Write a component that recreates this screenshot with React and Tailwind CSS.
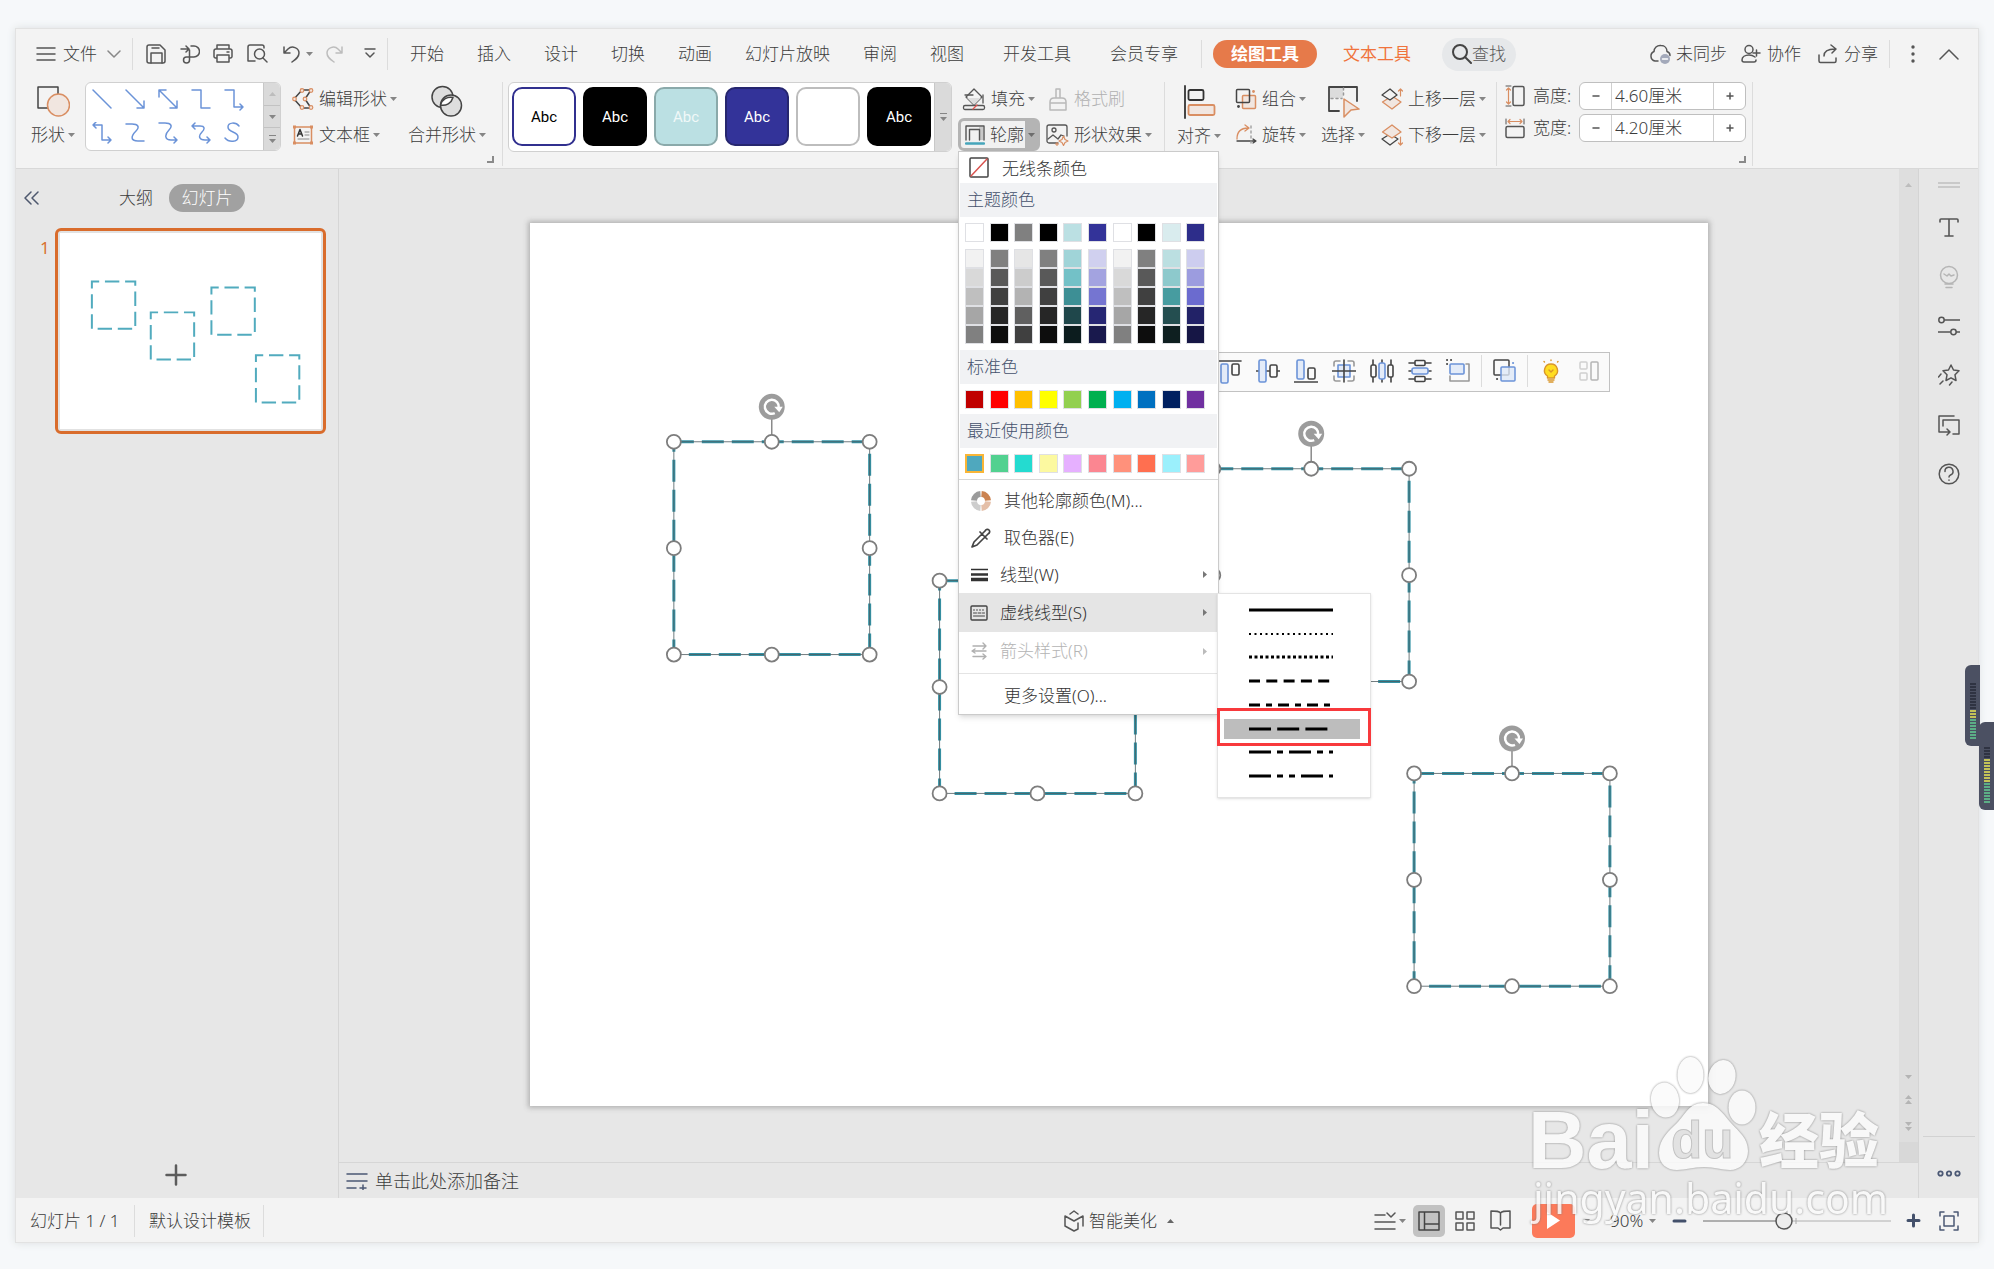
import React from "react";

/* ---------- shared pieces ---------- */

function Ico({ w = 22, h = 22, c = "#555", sw = 1.5, className = "", children }) {
  return (
    <svg
      width={w}
      height={h}
      viewBox={`0 0 ${w} ${h}`}
      fill="none"
      stroke={c}
      strokeWidth={sw}
      strokeLinecap="round"
      strokeLinejoin="round"
      aria-hidden="true"
      className={`block shrink-0 ${className}`}
    >
      {children}
    </svg>
  );
}

function Caret({ c = "#858585", up = false, className = "" }) {
  return (
    <svg width="7" height="4" viewBox="0 0 7 4" aria-hidden="true" className={`block shrink-0 ${className}`}>
      <path d={up ? "M0 4h7L3.500 0z" : "M0 0h7L3.500 4z"} fill={c} />
    </svg>
  );
}

const O = "#d98e62";
const B = "#6b93d8";

function Divider({ className = "" }) {
  return <div className={`w-px shrink-0 bg-[#dcdcdc] ${className}`} />;
}

function Corner({ className = "" }) {
  return (
    <Ico w={8} h={8} c="#8a8a8a" sw={2} className={className}>
      <path d="M7 1v6H1" strokeLinecap="butt" strokeLinejoin="miter" />
    </Ico>
  );
}

/* ---------- title / tab row ---------- */

function QuickAccess() {
  return (
    <div className="flex h-8 items-center">
      <button type="button" className="ml-5 flex items-center">
        <Ico w={20} h={14} c="#555"><path d="M1 1h18M1 7h18M1 13h18" /></Ico>
        <span className="ml-[7px]">文件</span>
        <Ico w={14} h={8} c="#888" className="ml-[10px]"><path d="M1 1l6 6 6-6" /></Ico>
      </button>
      <Divider className="ml-[11px] h-8" />
      <button type="button" aria-label="保存" className="ml-[13px]">
        <Ico w={20} h={20}>
          <path d="M3 1h11l5 5v11a2 2 0 0 1-2 2H3a2 2 0 0 1-2-2V3a2 2 0 0 1 2-2z" />
          <path d="M5 19V9h11v10M6 4h7" />
        </Ico>
      </button>
      <button type="button" aria-label="输出为PDF" className="ml-[14px]">
        <Ico w={20} h={20}>
          <path d="M1 5h8M6 2l3 3-3 3M11 2h3a5.500 5.500 0 0 1 0 11H6.500a3 3 0 1 0 3 3V6" />
        </Ico>
      </button>
      <button type="button" aria-label="打印" className="ml-[13px]">
        <Ico w={20} h={20}>
          <path d="M4 5V1h12v4M4 14H2.500a1.500 1.500 0 0 1-1.500-1.500V7a2 2 0 0 1 2-2h14a2 2 0 0 1 2 2v5.500a1.500 1.500 0 0 1-1.500 1.500H16M4 11h12v7H4zM14 8h2" />
        </Ico>
      </button>
      <button type="button" aria-label="打印预览" className="ml-[14px]">
        <Ico w={21} h={20}>
          <path d="M17 4V3a2 2 0 0 0-2-2H3a2 2 0 0 0-2 2v14h7" />
          <circle cx="12.500" cy="10" r="5" />
          <path d="M16 14l4 4" />
        </Ico>
      </button>
      <button type="button" aria-label="撤销" className="ml-[14px] flex items-center">
        <Ico w={18} h={18}><path d="M2 2v6h6M2 8l4-4c4-4 11-1 11 4 0 4-3 6-7 9" /></Ico>
        <Caret className="ml-[6px]" />
      </button>
      <button type="button" aria-label="恢复" className="ml-[13px]">
        <Ico w={18} h={18} c="#bdbdbd"><path d="M16 2v6h-6M16 8l-4-4C8 0 1 3 1 8c0 4 3 6 7 9" /></Ico>
      </button>
      <button type="button" aria-label="自定义快速访问工具栏" className="ml-[20px]">
        <Ico w={12} h={12}><path d="M1 1h10M2 5l4 4 4-4" /></Ico>
      </button>
      <Divider className="ml-[11px] h-8" />
    </div>
  );
}

function TabRow() {
  const main = ["开始", "插入", "设计", "切换", "动画", "幻灯片放映", "审阅", "视图"];
  return (
    <header className="flex h-[50px] items-center whitespace-nowrap">
      <QuickAccess />
      <nav className="ml-[22px] flex items-center gap-[33px]">
        {main.map((t) => (
          <button key={t} type="button">{t}</button>
        ))}
      </nav>
      <nav className="ml-[39px] flex items-center gap-[39px]">
        <button type="button">开发工具</button>
        <button type="button">会员专享</button>
      </nav>
      <Divider className="ml-[23px] h-7" />
      <button type="button" className="ml-[11px] h-7 w-[104px] rounded-full bg-[#e67a4a] font-bold text-white">绘图工具</button>
      <button type="button" className="ml-[26px] font-normal text-[#f0733c]">文本工具</button>
      <button type="button" className="ml-[31px] flex h-[33px] w-[74px] items-center rounded-full bg-[#e6e8ea] pl-[10px] text-[#5a5a5a]">
        <Ico w={20} h={20} c="#444" sw={2}><circle cx="8" cy="8" r="7" /><path d="M13 13l6 6" /></Ico>
        <span>查找</span>
      </button>
      <div className="flex-1" />
      <button type="button" className="flex items-center">
        <Ico w={22} h={20}>
          <path d="M9 17H6a5 5 0 0 1-1-9.500C5 4 8 1 12 1.500c4 0 6 3 6 6 1.500.5 3 2 3 4" />
          <circle cx="16" cy="15" r="5" fill="#a3a9ba" stroke="none" />
          <path d="M13.500 15h5" stroke="#fff" />
        </Ico>
        <span className="ml-[5px]">未同步</span>
      </button>
      <button type="button" className="ml-[14px] flex items-center">
        <Ico w={20} h={20}>
          <circle cx="8" cy="5.500" r="4" />
          <path d="M14 13c-2-1.500-4-2-6-2-4 0-7 2-7 5 0 1.500 1 2 2 2h10c1.500 0 2-.5 2-2M12 9h7M15.500 6v6" />
        </Ico>
        <span className="ml-[6px]">协作</span>
      </button>
      <button type="button" className="ml-[17px] flex items-center">
        <Ico w={20} h={20}>
          <path d="M1 11v6a1.500 1.500 0 0 0 1.500 1.500h14A1.500 1.500 0 0 0 18 17v-3M6 12c0-5 4-7 11-7M13 1l5 4-4 4" />
        </Ico>
        <span className="ml-[6px]">分享</span>
      </button>
      <Divider className="ml-[11px] h-7" />
      <button type="button" aria-label="更多" className="ml-[21px]">
        <svg width="4" height="18" viewBox="0 0 4 18" fill="#555" className="block"><circle cx="2" cy="2" r="1.700" /><circle cx="2" cy="9" r="1.700" /><circle cx="2" cy="16" r="1.700" /></svg>
      </button>
      <button type="button" aria-label="收起功能区" className="ml-[24px] mr-[19px]">
        <Ico w={20} h={11}><path d="M1 10l9-9 9 9" /></Ico>
      </button>
    </header>
  );
}

/* ---------- ribbon ---------- */

function BigButton({ icon, label }) {
  return (
    <button type="button" className="flex shrink-0 flex-col items-center pt-[3px]">
      {icon}
      <span className="mt-[5px] flex h-6 items-center">
        {label}
        <Caret className="ml-[3px]" />
      </span>
    </button>
  );
}

function SmallButton({ icon, label, caret = true, className = "" }) {
  return (
    <button type="button" className={`flex h-[33px] items-center ${className}`}>
      {icon}
      <span className="ml-[5px]">{label}</span>
      {caret && <Caret className="ml-[3px]" />}
    </button>
  );
}

const LINES = [
  <path d="M1 1l18 18" />,
  <path d="M1 1l18 18M19 12v7h-7" />,
  <path d="M1 1l18 18M19 12v7h-7M1 8V1h7" />,
  <path d="M1 1h9v18h9" />,
  <path d="M1 1h9v17h9M16 15l3 3-3 3" />,
  <path d="M1 3h9v15h9M16 15l3 3-3 3M4 0L1 3l3 3" />,
  <path d="M1 2h6c6 0 8 3 4 7-5 5-6 10 2 10h6" />,
  <path d="M1 1h6c6 0 8 3 4 7-5 5-4 10 2 10h6M16 15l3 3-3 3" />,
  <path d="M1 4h8c5 0 5 3 2 6-4 4-3 8 3 8h5M16 15l3 3-3 3M4 1L1 4l3 3" />,
  <path d="M15 4c-3-4-11-4-11 1 0 6 10 4 10 10 0 5-9 6-13 1" />,
];

function ShapeGallery() {
  return (
    <div className="ml-[10px] flex h-[69px] w-[196px] shrink-0 overflow-hidden rounded-[6px] border border-[#d0d0d0] bg-white">
      <div className="grid flex-1 grid-cols-5 grid-rows-2 place-items-center pr-[12px] pb-px">
        {LINES.map((l, i) => (
          <button key={i} type="button" aria-label={`线条 ${i + 1}`}>
            <Ico w={21} h={22} c={B}>{l}</Ico>
          </button>
        ))}
      </div>
      <div className="flex w-[17px] flex-col divide-y divide-[#c2c2c2] border-l border-[#c8c8c8] bg-[#dadada]">
        <button type="button" aria-label="上一行" className="flex flex-1 items-center justify-center"><Caret up c="#bdbdbd" /></button>
        <button type="button" aria-label="下一行" className="flex flex-1 items-center justify-center"><Caret /></button>
        <button type="button" aria-label="其他" className="flex flex-1 flex-col items-center justify-center gap-[3px]">
          <span className="h-px w-[7px] bg-[#858585]" />
          <Caret />
        </button>
      </div>
    </div>
  );
}

function StyleGallery() {
  const items = [
    "border-2 border-[#31308f] bg-white text-black",
    "bg-black text-white",
    "border-2 border-[#8aa9aa] bg-[#bbe0e3] text-[#f0f8f8]",
    "border-2 border-[#26266f] bg-[#333399] text-white",
    "border-2 border-[#bdbdbd] bg-white text-white",
    "bg-black text-white",
  ];
  return (
    <div className="ml-[5px] flex h-[70px] shrink-0 overflow-hidden rounded-[6px] border border-[#d0d0d0] bg-white">
      <div className="flex gap-[7px] px-[3px] pt-1">
        {items.map((c, i) => (
          <button key={i} type="button" className={`h-[59px] w-16 rounded-[10px] font-[Roboto,sans-serif] text-[15px] font-normal ${c}`}>Abc</button>
        ))}
      </div>
      <button type="button" aria-label="其他样式" className="flex w-[17px] flex-col items-center justify-center gap-[3px] border-l border-[#c8c8c8] bg-[#dadada]">
        <span className="h-px w-[7px] bg-[#858585]" />
        <Caret />
      </button>
    </div>
  );
}

function Stepper({ id, label, value, icon }) {
  return (
    <div className="flex items-center">
      {icon}
      <label htmlFor={id} className="ml-2 w-[46px]">{label}</label>
      <div className="flex h-7 w-[167px] overflow-hidden rounded-[6px] border border-[#bfbfbf] bg-white">
        <button type="button" aria-label="减小" className="flex w-8 items-center justify-center border-r border-[#cfcfcf]">
          <Ico w={8} h={8}><path d="M1 4h6" /></Ico>
        </button>
        <input id={id} defaultValue={value} className="min-w-0 flex-1 pl-[3px] outline-none" />
        <button type="button" aria-label="增大" className="flex w-8 items-center justify-center border-l border-[#cfcfcf]">
          <Ico w={8} h={8}><path d="M1 4h6M4 1v6" /></Ico>
        </button>
      </div>
    </div>
  );
}

function Ribbon() {
  return (
    <div className="flex h-[89px] whitespace-nowrap pt-[3px] leading-6">
      <div className="ml-[15px] flex">
        <BigButton
          label="形状"
          icon={
            <Ico w={34} h={33}>
              <rect x="2" y="2" width="20" height="21" stroke="#444" />
              <circle cx="22.500" cy="20" r="11" fill="#f1e6e0" stroke={O} />
            </Ico>
          }
        />
      </div>
      <ShapeGallery />
      <div className="ml-[11px] flex flex-col gap-[3px]">
        <SmallButton
          label="编辑形状"
          icon={
            <Ico>
              <path d="M19 2H10L2 11l8 9h9l-6-9z" stroke="#444" />
              <g fill="#f3e4dc" stroke={O} strokeWidth="1.200">
                <circle cx="19" cy="2.500" r="1.800" /><circle cx="10" cy="2.500" r="1.800" /><circle cx="2.500" cy="11" r="1.800" />
                <circle cx="10" cy="19.500" r="1.800" /><circle cx="19" cy="19.500" r="1.800" /><circle cx="13" cy="11" r="1.800" />
              </g>
            </Ico>
          }
        />
        <SmallButton
          label="文本框"
          icon={
            <Ico>
              <rect x="2.500" y="3" width="17" height="16" stroke={O} />
              <g fill={O} stroke="none"><rect x="1" y="1.500" width="3" height="3" /><rect x="18" y="1.500" width="3" height="3" /><rect x="1" y="17.500" width="3" height="3" /><rect x="18" y="17.500" width="3" height="3" /></g>
              <path d="M5.500 12L8 5.500l2.500 6.500M6.500 10h3" stroke="#333" />
              <path d="M13 8h4M13 11h4M6 15h11" strokeWidth="1" stroke="#888" />
            </Ico>
          }
        />
      </div>
      <div className="ml-[11px] flex">
        <BigButton
          label="合并形状"
          icon={
            <Ico w={34} h={33} c="#444">
              <circle cx="12.500" cy="12" r="10.500" fill="#dedede" /><circle cx="21" cy="20.500" r="10.500" fill="#dedede" />
              <path d="M23 12.500A10.500 10.500 0 0 1 10.500 20 10.500 10.500 0 0 1 23 12.500z" fill="#fff" />
            </Ico>
          }
        />
        <Corner className="mt-[73px]" />
      </div>
      <Divider className="ml-[8px] h-[84px]" />
      <StyleGallery />

      <div className="ml-[6px] flex flex-col gap-[3px]">
        <div className="flex">
          <SmallButton
            label="填充"
            className="ml-1"
            icon={
              <Ico w={24} h={24} sw={1.300}>
                <path d="M12 2l8 8-8 8-8-8z" /><path d="M5 11h14l-7 7z" fill="#ddd" stroke="none" />
                <path d="M3 8h8M21 8v8" /><rect x="1.500" y="18.500" width="21" height="4" rx="1.500" />
                <path d="M11 22l4-4" stroke="#e0524e" />
              </Ico>
            }
          />
          <button type="button" disabled className="ml-[14px] flex h-[33px] items-center text-[#b0b0b0]">
            <Ico w={18} h={24} c="#b9b9b9"><path d="M7 11V2h4v9M1 15c0-3 2-4 4-4h8c2 0 4 1 4 4v8H1zM1 16h16" /></Ico>
            <span className="ml-[7px]">格式刷</span>
          </button>
        </div>
        <div className="flex">
          <div className="relative">
            <button type="button" aria-expanded="true" className="flex h-[33px] w-[82px] items-center rounded-[6px] border-[3px] border-[#b4b4b4] bg-[#f1f1f1] pl-1">
              <Ico w={20} h={20} c="#555" sw={1.400}>
                <path d="M14 2h4v13h-4z" fill="#c9c9c9" stroke="none" />
                <path d="M1 15V1h18v14M4.500 15V4.500h10V15" />
                <path d="M1 18.500h18" stroke="#46a5bb" strokeWidth="2.500" />
              </Ico>
              <span className="ml-[5px] flex-1 text-left">轮廓</span>
              <span className="flex h-full w-3 items-center bg-[#b4b4b4]"><Caret c="#6d6d6d" className="ml-[3px]" /></span>
            </button>
            <OutlineMenu />
          </div>
          <SmallButton
            label="形状效果"
            className="ml-[6px]"
            icon={
              <Ico w={23} h={22} sw={1.300}>
                <path d="M12 19H3a2 2 0 0 1-2-2V3a2 2 0 0 1 2-2h16a2 2 0 0 1 2 2v9" /><circle cx="8" cy="6" r="2" />
                <path d="M2 15l5-4 5 4 3-4 3 1" />
                <path d="M17.500 12l1.500 3.500 3 1.500-3 1.500-1.500 3-1.500-3-3-1.500 3-1.500z" stroke={O} strokeWidth="1.200" fill="#f3f3f3" />
                <path d="M11 18.500v3M9.500 20h3" stroke={O} strokeWidth="1.200" />
              </Ico>
            }
          />
        </div>
      </div>
      <Divider className="ml-3 h-[84px]" />
      <div className="ml-3 flex">
        <BigButton
          label="对齐"
          icon={
            <Ico w={33} h={34} c="#333" sw={1.800}>
              <path d="M2 1v32" /><rect x="5.500" y="5" width="15" height="10" rx="1.500" />
              <rect x="5.500" y="20" width="26" height="10" rx="1.500" stroke={O} fill="#f1e6e0" />
            </Ico>
          }
        />
      </div>
      <div className="ml-[14px] flex flex-col gap-[3px]">
        <SmallButton
          label="组合"
          icon={
            <Ico>
              <rect x="7.500" y="7.500" width="13" height="13" rx="1" fill="#f1e6e0" stroke={O} />
              <rect x="1.500" y="1.500" width="13" height="13" rx="1" stroke="#444" />
              <g stroke="none"><circle cx="18.500" cy="3.500" r="1.400" fill={O} /><circle cx="3.500" cy="18.500" r="1.400" fill="#444" /></g>
            </Ico>
          }
        />
        <SmallButton
          label="旋转"
          icon={
            <Ico sw={1.300}>
              <path d="M2 15C2 8 6 4 13 4M10 1l4 3-4 3" stroke={O} />
              <path d="M2 17h18M18 15l3 2-3 2" stroke="#444" /><path d="M16 2v20" strokeDasharray="2 3" stroke="#999" />
            </Ico>
          }
        />
      </div>
      <div className="ml-[15px] flex">
        <BigButton
          label="选择"
          icon={
            <Ico w={33} h={33}>
              <path d="M2 2h14v11H2z" fill="#dcdcdc" stroke="none" />
              <path d="M12 26H2V2h28v14" stroke="#444" strokeWidth="1.800" />
              <path d="M4 13.500h11M16.500 3v10" strokeDasharray="2 3" stroke="#999" />
              <path d="M17 14l15 10-8 1-7 7z" fill="#f1e6e0" stroke={O} />
            </Ico>
          }
        />
      </div>
      <div className="ml-[16px] flex flex-col gap-[3px]">
        <SmallButton
          label="上移一层"
          icon={
            <Ico sw={1.300}>
              <path d="M1.500 14L11 8l9 6-9 7z" fill="#f1e6e0" stroke={O} />
              <path d="M1 7l8-6 7 6-7 5z" fill="#f3f3f3" stroke="#444" />
              <path d="M19.500 8V1M17.500 3l2-2 2 2" stroke={O} strokeWidth="1.200" />
            </Ico>
          }
        />
        <SmallButton
          label="下移一层"
          icon={
            <Ico sw={1.300}>
              <path d="M1 15l8-5 8 5-8 6z" stroke="#444" />
              <path d="M1.500 8L11 1l9 7-9 6z" fill="#f1e6e0" stroke={O} />
              <path d="M19.500 13v8M17.500 19l2 2 2-2" stroke={O} strokeWidth="1.200" />
            </Ico>
          }
        />
      </div>
      <Divider className="ml-[10px] h-[84px]" />
      <div className="ml-2 flex flex-col gap-1">
        <Stepper
          id="shape-height"
          label="高度:"
          value="4.60厘米"
          icon={
            <Ico w={20} h={22}>
              <rect x="8" y="1.500" width="11" height="19" rx="1.500" />
              <path d="M1 1h5M1 21h5" strokeWidth="1" /><path d="M3.500 3v16M1.500 5l2-2 2 2M1.500 17l2 2 2-2" stroke={O} strokeWidth="1.200" />
            </Ico>
          }
        />
        <Stepper
          id="shape-width"
          label="宽度:"
          value="4.20厘米"
          icon={
            <Ico w={20} h={22}>
              <rect x="1" y="9.500" width="18" height="11" rx="1.500" />
              <path d="M1 2v5M19 2v5" strokeWidth="1" /><path d="M3 4.500h14M5 2.500l-2 2 2 2M15 2.500l2 2-2 2" stroke={O} strokeWidth="1.200" />
            </Ico>
          }
        />
        <Corner className="mt-[9px] self-end" />
      </div>
      <Divider className="ml-[6px] h-[84px]" />
    </div>
  );
}

/* ---------- outline colour menu ---------- */

const THEME = ["#ffffff", "#000000", "#808080", "#000000", "#bbe0e3", "#333399", "#ffffff", "#000000", "#d9ecee", "#2d2d8a"];
const SHADES = [
  ["#f2f2f2", "#808080", "#e6e6e6", "#808080", "#a0d4d8", "#d0d0ef", "#f2f2f2", "#808080", "#bbdfe1", "#cdcdef"],
  ["#d9d9d9", "#595959", "#cccccc", "#595959", "#73c1c7", "#a3a3e0", "#d9d9d9", "#595959", "#8dc9cc", "#9c9cdf"],
  ["#bfbfbf", "#404040", "#b3b3b3", "#404040", "#3d8f95", "#7575d1", "#bfbfbf", "#404040", "#479ca0", "#6b6bcf"],
  ["#a6a6a6", "#262626", "#606060", "#262626", "#1f474b", "#262673", "#a6a6a6", "#262626", "#244e50", "#222267"],
  ["#808080", "#0d0d0d", "#404040", "#0d0d0d", "#0c1c1e", "#19194d", "#808080", "#0d0d0d", "#0e1f20", "#161645"],
];
const STANDARD = ["#c00000", "#ff0000", "#ffc000", "#ffff00", "#92d050", "#00b050", "#00b0f0", "#0070c0", "#002060", "#7030a0"];
const RECENT = ["#4fa8be", "#52d190", "#24dbd0", "#fcf9a0", "#e6b0ff", "#fb8691", "#ff917b", "#ff6f50", "#9bf0fc", "#ff9c9a"];

function Swatches({ colors, selected = -1 }) {
  return (
    <div className="ml-[6px] grid w-[246px] grid-cols-10">
      {colors.map((c, i) => (
        <button
          key={i}
          type="button"
          aria-label={c}
          className={i === selected ? "h-[19px] w-[19px] border-2 border-[#f9b536]" : "h-[19px] w-[19px] border border-[#dfe0e4]"}
          style={{ backgroundColor: c }}
        />
      ))}
    </div>
  );
}

function MenuHead({ children }) {
  return <div className="mx-px h-[34px] bg-[#f1f2f4] pl-[7px] leading-[34px] text-[#44516c]">{children}</div>;
}

function MenuArrow({ c = "#777" }) {
  return (
    <svg width="4" height="7" viewBox="0 0 4 7" className="mr-[11px] ml-auto block" aria-hidden="true"><path d="M0 0v7l4-3.500z" fill={c} /></svg>
  );
}

const DASHES = [
  { d: "none", w: 3 },
  { d: "2 3.500", w: 2 },
  { d: "3 2.500", w: 3 },
  { d: "11 6.300", w: 3 },
  { d: "11 6 6 6", w: 3 },
  { d: "22 6.200", w: 3 },
  { d: "22 6 6 6", w: 3 },
  { d: "22 6 6 6 6 6", w: 3 },
];

function DashMenu() {
  return (
    <div className="absolute top-0 right-[-153px] z-30 h-[205px] w-[154px] border border-[#e4e4e4] bg-white pt-1 shadow-sm">
      <div className="grid h-[190px] grid-rows-8">
        {DASHES.map((l, i) => (
          <button
            key={i}
            type="button"
            aria-label={`虚线 ${i + 1}`}
            className={i === 5 ? "mr-[10px] ml-[6px] my-[2px] flex items-center bg-[#bdbdbd] pl-[25px]" : "mr-[10px] ml-[6px] my-[2px] flex items-center pl-[25px]"}
          >
            <svg width="84" height="4" viewBox="0 0 84 4" className="block"><path d="M0 2h84" stroke="#000" strokeWidth={l.w} strokeDasharray={l.d} /></svg>
          </button>
        ))}
      </div>
      <div className="pointer-events-none absolute top-[114px] -right-px -left-px h-[38px] border-[3px] border-[#f8393c]" />
    </div>
  );
}

function OutlineMenu() {
  return (
    <div className="absolute top-full left-0 z-20 w-[261px] border border-[#cbcbcb] bg-white text-[#333] shadow-md">
      <button type="button" className="flex h-[31px] w-full items-center pl-[10px]">
        <Ico w={20} h={21} c="#444"><rect x="1" y="1" width="18" height="19" rx="1" /><path d="M2 19L18 2" stroke="#d9534f" /></Ico>
        <span className="ml-[13px] pt-[2px] leading-6">无线条颜色</span>
      </button>
      <MenuHead>主题颜色</MenuHead>
      <div className="pt-[6px]"><Swatches colors={THEME} /></div>
      <div className="pt-[7px] pb-[6px]">
        {SHADES.map((r, i) => <Swatches key={i} colors={r} />)}
      </div>
      <MenuHead>标准色</MenuHead>
      <div className="pt-[6px] pb-[5px]"><Swatches colors={STANDARD} /></div>
      <MenuHead>最近使用颜色</MenuHead>
      <div className="border-b border-[#d8d8d8] pt-[6px] pb-[6px]"><Swatches colors={RECENT} selected={0} /></div>

      <button type="button" className="flex h-10 w-full items-center pt-[2px] pl-3">
        <svg width="20" height="20" viewBox="0 0 20 20" fill="none" strokeWidth="6" className="block" aria-hidden="true">
          <path d="M3 9.500A7 7 0 0 1 9.500 3" stroke="#9b9b9b" /><path d="M10.500 3A7 7 0 0 1 17 9.500" stroke="#cb8351" />
          <path d="M17 10.500A7 7 0 0 1 10.500 17" stroke="#e4bfa8" /><path d="M9.500 17A7 7 0 0 1 3 10.500" stroke="#cdcdcd" />
        </svg>
        <span className="ml-[13px]">其他轮廓颜色(M)...</span>
      </button>
      <button type="button" className="flex h-[36px] w-full items-center pl-3">
        <Ico w={20} h={20} c="#444" sw={1.700}><path d="M11 6l-8 8-2 5 5-2 8-8M9 4l7 7M11 6l3-3c1-2 3-2 4-1s1 3-1 4l-3 3" /></Ico>
        <span className="ml-[13px]">取色器(E)</span>
      </button>
      <button type="button" className="flex h-[37px] w-full items-center pl-3">
        <svg width="17" height="14" viewBox="0 0 17 14" className="block" aria-hidden="true"><path d="M0 1h17v1H0zM0 5.500h17v2H0zM0 10h17v3H0z" fill="#333" stroke="#333" strokeWidth=".5" /></svg>
        <span className="ml-3">线型(W)</span>
        <MenuArrow />
      </button>
      <div className="relative">
        <button type="button" aria-expanded="true" className="flex h-[39px] w-full items-center bg-[#e5e5e5] pl-[11px]">
          <Ico w={18} h={16} c="#444" sw={1.400}>
            <rect x="1" y="1" width="16" height="14" rx="1" />
            <path d="M3.500 5h11" strokeDasharray="1 2" strokeWidth="1" /><path d="M3.500 8h11" strokeDasharray="3 1.500" strokeWidth="1" /><path d="M3.500 11h11" strokeWidth="1" />
          </Ico>
          <span className="ml-3">虚线线型(S)</span>
          <MenuArrow />
        </button>
        <DashMenu />
      </div>
      <button type="button" disabled className="flex h-[42px] w-full items-center border-b border-[#e4e4e4] pb-[3px] pl-3 text-[#b4b4b4]">
        <Ico w={17} h={18} c="#b0b0b0" sw={1.400}><path d="M2 4h13M12 1l3 3-3 3M2 9h13M4 7L1 9l3 2M2 14.500h13M12 12l3 2.500-3 2.500" /></Ico>
        <span className="ml-3">箭头样式(R)</span>
        <MenuArrow c="#bbb" />
      </button>
      <button type="button" className="flex h-10 w-full items-center pt-1 pl-[45px]">更多设置(O)...</button>
    </div>
  );
}

/* ---------- slide panel ---------- */

const RECTS = [[144, 219], [410, 358], [684, 246], [885, 551]];
const RW = 196;
const RH = 213;

function SlidePanel() {
  return (
    <aside className="flex w-[323px] shrink-0 flex-col border-r border-[#d6d6d6]">
      <div className="mt-[15px] flex h-7 items-center">
        <button type="button" aria-label="收起窗格" className="ml-2">
          <Ico w={16} h={14} c="#4e586e"><path d="M7 1L1 7l6 6M14 1L8 7l6 6" /></Ico>
        </button>
        <button type="button" className="ml-[79px]">大纲</button>
        <button type="button" className="ml-[16px] h-7 w-[76px] rounded-full bg-[#a1a1a1] text-white">幻灯片</button>
      </div>
      <div className="mt-4 flex">
        <span className="ml-6 mt-2 w-2 font-normal text-[#d87232]">1</span>
        <button type="button" aria-label="幻灯片 1" className="ml-[7px] h-[206px] w-[271px] rounded-[6px] border-[3px] border-[#d96c2c] bg-[#e2e2e2] p-[2px]">
          <svg viewBox="0 0 1179 884" preserveAspectRatio="none" className="block h-full w-full bg-white">
            {RECTS.map(([x, y]) => (
              <path key={x} d={`M${x} ${y}h${RW}v${RH}h${-RW}z`} fill="none" stroke="#51abbe" strokeWidth="9" strokeDasharray="65 26" strokeDashoffset="32" />
            ))}
          </svg>
        </button>
      </div>
      <div className="flex-1" />
      <button type="button" aria-label="新建幻灯片" className="mb-3 ml-[149px] self-start">
        <Ico w={22} h={22} c="#5c5c5c" sw={2.500}><path d="M11 1.500v19M1.500 11h19" /></Ico>
      </button>
    </aside>
  );
}

/* ---------- canvas ---------- */

function FloatingToolbar() {
  const k = "#444";
  const f = "#e3ebf8";
  const icons = [
    <><path d="M1 2h22" stroke={k} /><rect x="3" y="5" width="7" height="19" rx="1.500" stroke={B} fill={f} /><rect x="14" y="5" width="7" height="11" rx="1.500" stroke={k} /></>,
    <><path d="M0 12h24" stroke={k} /><rect x="3" y="1" width="7" height="22" rx="1.500" stroke={B} fill={f} /><rect x="14" y="6" width="7" height="12" rx="1.500" stroke={k} fill="#fafafa" /></>,
    <><path d="M0 23h24" stroke={k} /><rect x="3" y="1" width="7" height="19" rx="1.500" stroke={B} fill={f} /><rect x="14" y="9" width="7" height="11" rx="1.500" stroke={k} /></>,
    <><path d="M2 7V4a2 2 0 0 1 2-2h4M16 2h4a2 2 0 0 1 2 2v3M22 17v3a2 2 0 0 1-2 2h-4M8 22H4a2 2 0 0 1-2-2v-3" stroke="#999" /><rect x="6" y="6" width="12" height="12" stroke={B} fill={f} /><path d="M0 12h24M12 1v22" stroke={k} /></>,
    <><path d="M3 1v22M12 1v22M21 1v22" stroke={k} /><rect x="1" y="6" width="5" height="12" rx="1.500" stroke={k} fill="#fafafa" /><rect x="9" y="4" width="6" height="16" rx="2" stroke={B} fill={f} /><rect x="18" y="6" width="5" height="12" rx="1.500" stroke={k} fill="#fafafa" /></>,
    <><path d="M1 4h22M1 12h22M1 20h22" stroke={k} /><rect x="7" y="1.500" width="10" height="5" rx="1" stroke={k} fill="#fafafa" /><rect x="4" y="9" width="16" height="6" rx="2" stroke={B} fill={f} /><rect x="7" y="17.500" width="10" height="5" rx="1" stroke={k} fill="#fafafa" /></>,
    <><path d="M20 5h3v17H4v-5" stroke="#999" /><rect x="4" y="5" width="14" height="10" rx="1" stroke={B} fill={f} /><path d="M1 5h.1M5 1h.1M1 1h.1" stroke={k} strokeWidth="2" /></>,
  ];
  return (
    <div className="absolute top-[129px] right-[98px] flex h-10 w-[430px] items-center border border-[#c2c2c2] bg-[#fafafa] pb-[2px]">
      <div className="ml-auto flex items-center gap-[14px] pr-[11px]">
        {icons.map((ic, i) => (
          <button key={i} type="button" aria-label={`对齐工具 ${i + 1}`}><Ico w={24} h={25} sw={1.600}>{ic}</Ico></button>
        ))}
      </div>
      <Divider className="h-8" />
      <button type="button" aria-label="组合" className="mx-[11px]">
        <Ico w={23} h={24}>
          <rect x="1" y="1" width="15" height="15" rx="1" stroke={k} /><rect x="8" y="8" width="14" height="14" rx="1" stroke={B} fill="#dfe8f7cc" />
          <path d="M20 4h.1" stroke={B} strokeWidth="2" /><path d="M4 20h.1" stroke={k} strokeWidth="2" />
        </Ico>
      </button>
      <Divider className="h-8" />
      <button type="button" aria-label="智能提示" className="ml-[14px]">
        <Ico w={18} h={24} c="#d9962b" sw={1.400}>
          <path d="M9 5a6.500 6.500 0 0 1 3.500 12v2h-7v-2A6.500 6.500 0 0 1 9 5z" fill="#ffdd22" /><path d="M7 11l2 2 2-2M6 21h6M7 23h4M9 1v.5M2 2.500l.5.5M16 2.500l-.5.5" />
        </Ico>
      </button>
      <button type="button" aria-label="布局" className="mr-[10px] ml-[19px]">
        <Ico w={20} h={22} c="#b5b5b5"><rect x="1" y="2" width="7" height="7" rx="1" stroke="#d0d0d0" /><rect x="1" y="13" width="7" height="7" rx="1" stroke="#d0d0d0" /><rect x="12" y="2" width="7" height="18" rx="1" /></Ico>
      </button>
    </div>
  );
}

function Selection({ x, y }) {
  const xs = [0, RW / 2, RW];
  const ys = [0, RH / 2, RH];
  return (
    <g transform={`translate(${x} ${y})`}>
      <path d={`M0 0h${RW}v${RH}h${-RW}z`} fill="none" stroke="#3593a6" strokeWidth="3" strokeDasharray="22 8" strokeDashoffset="2" />
      <path d={`M0 0h${RW}v${RH}h${-RW}z`} fill="none" stroke="#4b5a5e" strokeWidth="1" opacity="0.8" />
      <path d={`M${RW / 2} 0v-26`} stroke="#8a8a8a" strokeWidth="1.500" />
      {xs.map((a) => ys.map((b) => (a === RW / 2 && b === RH / 2 ? null : (
        <circle key={`${a}-${b}`} cx={a} cy={b} r="7" fill="#fff" stroke="#7d7d7d" strokeWidth="1.800" />
      ))))}
      <g transform={`translate(${RW / 2} -35)`}>
        <circle r="13" fill="#9c9c9c" />
        <path d="M3 6.300A7 7 0 1 1 7 1" fill="none" stroke="#fff" strokeWidth="2.500" />
        <path d="M2.500 0h8.500L7.500 5.500z" fill="#fff" />
      </g>
    </g>
  );
}

function Canvas() {
  return (
    <div className="flex min-h-0 flex-1 border-b border-[#d6d6d6]">
      <div className="min-w-0 flex-1 pt-[54px]">
        <div className="relative mx-auto aspect-[1179/884] w-[75.500%] bg-white shadow-[0_0_5px_2px_#b3b3b3]">
          <svg viewBox="0 0 1179 884" className="block h-full w-full">
            {RECTS.map(([x, y]) => <Selection key={x} x={x} y={y} />)}
          </svg>
          <FloatingToolbar />
        </div>
      </div>
      <div className="flex w-5 flex-col items-center border-r border-[#d4d4d4] bg-[#dedede]">
        <Caret up c="#bdbdbd" className="mt-[14px]" />
        <div className="flex-1" />
        <Caret c="#b4b4b4" />
        <div className="mt-4 flex flex-col gap-px"><Caret up c="#b4b4b4" /><Caret up c="#b4b4b4" /></div>
        <div className="mt-[18px] flex flex-col gap-px"><Caret c="#b4b4b4" /><Caret c="#b4b4b4" /></div>
        <div className="mt-[11px] h-5 w-full bg-[#d8d8d8]" />
      </div>
    </div>
  );
}

function Rail() {
  return (
    <aside className="flex w-[59px] shrink-0 flex-col items-center">
      <div className="mt-[13px] h-[6px] w-[22px] border-y-[2px] border-[#c9c9c9]" />
      <div className="mt-[27px] flex flex-1 flex-col items-center gap-[25px]">
        <button type="button" aria-label="文本"><Ico w={22} h={25} sw={1.600}><path d="M2 7V5a1 1 0 0 1 1-1h16a1 1 0 0 1 1 1v2M11 4v17M7 21h8" /></Ico></button>
        <button type="button" aria-label="提示"><Ico w={22} h={24} c="#b5b5b5"><circle cx="11" cy="10" r="8.500" /><path d="M6 9l3 2 2-2 2 2 3-1M7 19h8M8 22.500h6" /></Ico></button>
        <button type="button" aria-label="属性"><Ico w={22} h={24}><circle cx="3.500" cy="6" r="2.700" /><path d="M6.500 6H22M0 18h12M18.500 18H22" /><circle cx="15.500" cy="18" r="2.700" /></Ico></button>
        <button type="button" aria-label="动画"><Ico w={22} h={25}><path d="M13 2l2.500 5 5.500.8-4 4 1 5.700-5-2.700-5 2.700 1-5.700-4-4L10.500 7zM3 11l-2.500 3M5 18l-3 3M14 19l-2.500 3" /></Ico></button>
        <button type="button" aria-label="切换"><Ico w={22} h={24}><path d="M16 3H1v16h10M9 16l3 3-3 3M5 13V7h16v14h-6" /></Ico></button>
        <button type="button" aria-label="帮助"><Ico w={22} h={24}><circle cx="11" cy="12" r="9.800" /><path d="M7 9.500a4 4 0 1 1 5.500 3.500c-1 .5-1.500 1-1.500 2M11 18v.2" /></Ico></button>
      </div>
      <div className="h-px w-[52px] bg-[#d2d2d2]" />
      <button type="button" aria-label="更多" className="mt-[33px] mb-[21px]">
        <Ico w={24} h={7} c="#4b5874" sw={1.800}><circle cx="3.500" cy="3.500" r="2.200" /><circle cx="12" cy="3.500" r="2.200" /><circle cx="20.500" cy="3.500" r="2.200" /></Ico>
      </button>
    </aside>
  );
}

/* ---------- status bar ---------- */

function StatusBar() {
  return (
    <footer className="flex h-11 items-center whitespace-nowrap pt-px">
      <span className="ml-[14px] w-[104px]">幻灯片 1 / 1</span>
      <Divider className="h-8" />
      <span className="ml-[14px]">默认设计模板</span>
      <Divider className="ml-[12px] h-8" />
      <div className="flex-1" />
      <button type="button" className="flex items-center">
        <Ico w={20} h={22}><path d="M6 4l4-3 4 3M1 6v10l9 5 4-2v-6M1 6l9 5 9-5v10" /></Ico>
        <span className="ml-[5px]">智能美化</span>
        <Caret up c="#666" className="ml-[10px]" />
      </button>
      <div className="w-[200px] shrink-0" />
      <button type="button" aria-label="备注" className="flex items-center">
        <Ico w={22} h={20}><path d="M1 4h10M1 11h20M1 18h20M13 2l4 4 4-4" /></Ico>
        <Caret className="ml-[3px]" />
      </button>
      <button type="button" aria-label="普通视图" className="ml-[7px] flex h-8 w-8 items-center justify-center rounded-[5px] bg-[#c2c2c2]">
        <Ico w={22} h={20} c="#444"><path d="M1 1h20v18H1zM6.500 1v18M6.500 13H21" /></Ico>
      </button>
      <button type="button" aria-label="幻灯片浏览" className="ml-[10px]">
        <Ico w={20} h={20}><path d="M1 1h7v7H1zM12 1h7v7h-7zM1 12h7v7H1zM12 12h7v7h-7z" /></Ico>
      </button>
      <button type="button" aria-label="阅读视图" className="ml-[15px]">
        <Ico w={21} h={21}><path d="M10.500 3C9 1 7 1 1 1v17h7l2.500 2 2.500-2h7V1c-6 0-8 0-9.500 2zM10.500 3v12" /></Ico>
      </button>
      <button type="button" aria-label="放映" className="ml-[21px] flex h-[34px] w-[43px] items-center justify-center rounded-[5px] bg-[#fc7a5a]">
        <svg width="13" height="17" viewBox="0 0 13 17" className="block"><path d="M0 0l13 8.500L0 17z" fill="#fff" /></svg>
      </button>
      <Caret className="ml-2" />
      <button type="button" className="ml-5 flex w-[46px] items-center justify-between">90%<Caret /></button>
      <button type="button" aria-label="缩小" className="ml-4"><Ico w={15} h={4} c="#43506b" sw={3}><path d="M2 2h11" /></Ico></button>
      <div className="relative ml-4 h-5 w-[188px]">
        <input type="range" aria-label="缩放" min="0" max="100" defaultValue="43" className="absolute inset-0 w-full opacity-0" />
        <svg width="188" height="20" viewBox="0 0 188 20" className="pointer-events-none block">
          <path d="M0 10h81" stroke="#6a6a6a" /><path d="M81 10h107" stroke="#b0b0b0" strokeWidth="1" /><path d="M93 7v6" stroke="#aaa" />
          <circle cx="81" cy="10" r="8" fill="#ededed" stroke="#555" strokeWidth="1.500" />
        </svg>
      </div>
      <button type="button" aria-label="放大" className="ml-[15px]"><Ico w={15} h={15} c="#43506b" sw={3}><path d="M2 7.500h11M7.500 2v11" /></Ico></button>
      <button type="button" aria-label="适应窗口" className="mr-[19px] ml-[18px]">
        <Ico w={20} h={20} c="#4b5874"><path d="M1 5V1h4M15 1h4v4M19 15v4h-4M5 19H1v-4M5 5h10v10H5z" /></Ico>
      </button>
    </footer>
  );
}

/* ---------- overlays ---------- */

function Meter({ className, dark }) {
  const bars = Array.from({ length: 19 });
  return (
    <div className={`absolute flex w-[15px] flex-col items-center justify-end gap-px rounded-l-[6px] bg-[#4b5062] py-[7px] ${className}`}>
      {bars.map((_, i) => (
        <span key={i} className={i < dark ? "h-[2px] w-[6px] bg-[#2f3342]" : i < 12 ? "h-[2px] w-[6px] bg-[#c3c257]" : "h-[2px] w-[6px] bg-[#5cae86]"} />
      ))}
    </div>
  );
}

function Watermark() {
  return (
    <svg viewBox="0 0 362 184" className="pointer-events-none absolute right-[104px] bottom-[40px] z-10 w-[362px] overflow-visible opacity-85 drop-shadow-[0_0_1px_#777]">
      <g fill="#fbfbfb">
        <text x="0" y="123" fontFamily="Liberation Sans" fontWeight="700" fontSize="81">Bai</text>
        <ellipse cx="137" cy="55" rx="14" ry="17.500" transform="rotate(-8 137 55)" />
        <ellipse cx="162.500" cy="30" rx="13" ry="18" />
        <ellipse cx="194" cy="32" rx="13.500" ry="17" transform="rotate(12 194 32)" />
        <ellipse cx="214" cy="62.500" rx="13.500" ry="17" />
        <path d="M175 58c-14 0-18 12-26 20s-18 16-18 30c0 11 8 17 18 17 9 0 16-3 27-3s17 3 26 3c10 0 18-8 18-19 0-13-9-19-17-28s-14-20-28-20z" />
        <text x="231" y="118" fontFamily="Noto Sans CJK SC" fontWeight="900" fontSize="60">经验</text>
        <text x="5" y="169" fontFamily="Noto Sans" fontWeight="400" fontSize="41">jingyan.baidu.com</text>
      </g>
      <text x="143" y="113" fontFamily="Liberation Sans" fontWeight="700" fontSize="51" fill="#e2e2e2" stroke="#bdbdbd">du</text>
    </svg>
  );
}

export default function App() {
  return (
    <div className="relative flex min-h-screen flex-col overflow-hidden bg-[#f6f8fa] px-[15px] pt-7 pb-[26px] font-['Noto_Sans','Noto_Sans_CJK_SC',sans-serif] text-[17px] leading-6 font-light text-[#3c3c3c]">
      <div className="flex flex-1 flex-col border border-[#e2e2e2] bg-[#f3f3f3] shadow-[0_0_8px_#dcdfe0]">
        <TabRow />
        <Ribbon />
        <div className="flex flex-1 border-t border-[#d8d8d8] bg-[#e7e7e7]">
          <SlidePanel />
          <div className="flex min-w-0 flex-1 flex-col">
            <Canvas />
            <div className="flex h-[35px] items-center border-r border-[#d6d6d6] pl-[7px] text-lg">
              <Ico w={22} h={18} c="#4b5874"><path d="M1 2h20M1 9h20M1 16h9M14 16h6M17 13v5" /></Ico>
              <span className="ml-[7px]">单击此处添加备注</span>
            </div>
          </div>
          <Rail />
        </div>
        <StatusBar />
      </div>
      <Meter className="top-[665px] right-[14px] h-[81px]" dark={9} />
      <Meter className="top-[722px] right-0 h-[88px]" dark={4} />
      <Watermark />
    </div>
  );
}
